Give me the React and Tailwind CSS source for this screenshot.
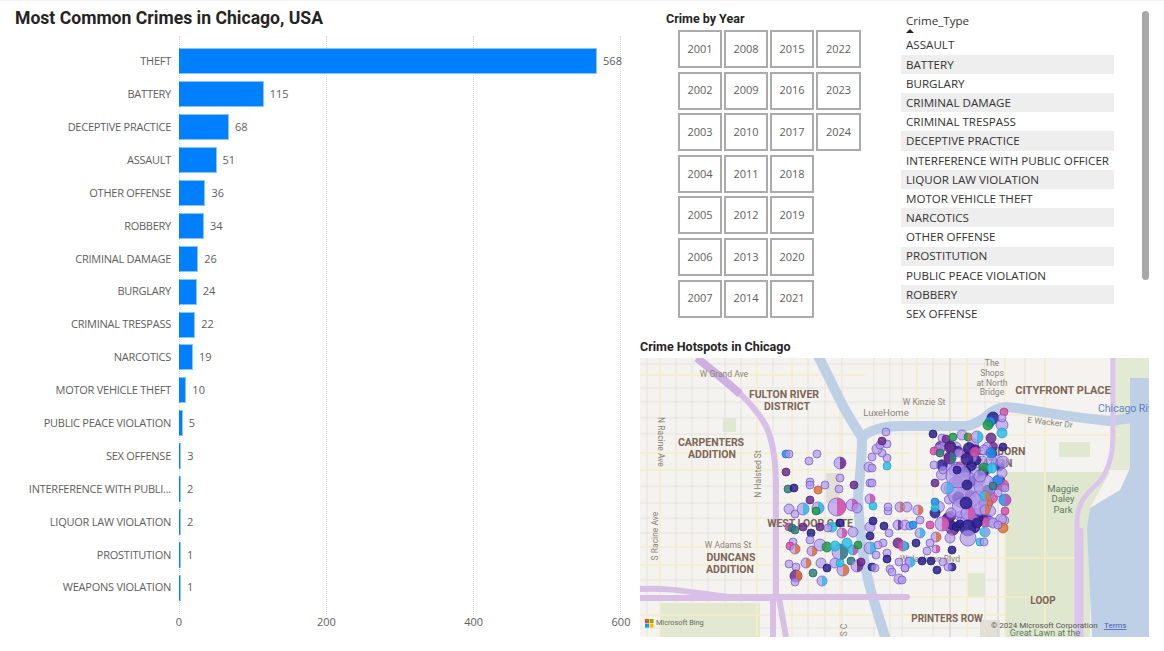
import React from 'react';

const crimes = [
  ['THEFT', 568], ['BATTERY', 115], ['DECEPTIVE PRACTICE', 68], ['ASSAULT', 51], ['OTHER OFFENSE', 36],
  ['ROBBERY', 34], ['CRIMINAL DAMAGE', 26], ['BURGLARY', 24], ['CRIMINAL TRESPASS', 22], ['NARCOTICS', 19],
  ['MOTOR VEHICLE THEFT', 10], ['PUBLIC PEACE VIOLATION', 5], ['SEX OFFENSE', 3],
  ['INTERFERENCE WITH PUBLI...', 2], ['LIQUOR LAW VIOLATION', 2], ['PROSTITUTION', 1], ['WEAPONS VIOLATION', 1],
];

const crimeTypes = [
  'ASSAULT', 'BATTERY', 'BURGLARY', 'CRIMINAL DAMAGE', 'CRIMINAL TRESPASS', 'DECEPTIVE PRACTICE',
  'INTERFERENCE WITH PUBLIC OFFICER', 'LIQUOR LAW VIOLATION', 'MOTOR VEHICLE THEFT', 'NARCOTICS',
  'OTHER OFFENSE', 'PROSTITUTION', 'PUBLIC PEACE VIOLATION', 'ROBBERY', 'SEX OFFENSE',
];

const years = Array.from({ length: 24 }, (_, i) => 2001 + i);
const axisTicks = [0, 200, 400, 600];
const PX_PER_UNIT = 0.736;

const colors = {
  l: ['#b09ae8', '#6f50d2'], n: ['#2a1f8f', '#1c1470'], p: ['#6b2d8f', '#4c1f70'], c: ['#2cc0e8', '#1f9ac4'],
  t: ['#2f7f7f', '#225f60'], k: ['#d94fa8', '#b0388a'], o: ['#e2703a', '#b8522a'], g: ['#1f9a4a', '#15793a'], b: ['#1e90ee', '#1a6fc0'],
};

// x, y, colour, radius, second slice colour
const bubbles = [
  [146,96,'b',4],[149,96,'l',4],[177,96,'l'],[169,103,'l'],[200,105,'l',6,'p'],[146,114,'p'],[148,131,'t'],[154,130,'n'],
  [170,124,'l'],[170,127,'l'],[178,132,'o'],[185,127,'l'],[200,120,'l'],[199,131,'l'],[214,127,'p'],[230,125,'l'],[232,125,'l'],
  [229,109,'l',5],[232,110,'l'],[247,108,'c'],[247,100,'l'],[232,99,'l'],[242,95,'l'],[237,91,'l',5],[240,87,'l'],[247,86,'l'],[242,83,'p'],[246,74,'l'],
  [170,142,'p'],[149,151,'l',5],[155,156,'l'],[163,151,'l',6,'c'],[178,150,'l',6,'c'],[176,153,'g',4],[197,149,'l',9,'k'],[212,147,'l',6,'k'],[217,150,'l',5],
  [230,141,'l',5,'k'],[233,148,'c'],[248,153,'l'],[248,149,'l'],[260,149,'l',5,'o'],[267,149,'l',5],
  [149,169,'k'],[152,170,'t'],[155,172,'t'],[163,169,'p'],[180,169,'p'],[171,175,'n'],[192,169,'c',5],[188,170,'l'],[200,165,'n'],[202,175,'l',5,'k'],[213,174,'l',5],
  [230,169,'l',5],[233,163,'n'],[244,168,'n'],[249,175,'l'],[230,178,'n'],[258,167,'l',5,'p'],[265,167,'l',5],[270,168,'l'],
  [153,184,'l'],[150,188,'k'],[155,191,'l',5,'o'],[172,193,'l',5,'o'],[170,182,'l'],[180,187,'l',6],[187,189,'g',5],[200,194,'l',8,'t'],[195,188,'c',5],[207,185,'c',5],
  [213,192,'c',5,'k'],[218,187,'g',4],[230,190,'l',6,'c'],[236,197,'l'],[243,185,'l'],[238,187,'l'],[258,185,'p',5],[265,188,'b',4],[247,195,'l'],[247,201,'n'],
  [149,206,'l'],[166,205,'l',5,'o'],[156,209,'l'],[156,218,'p',6,'o'],[155,224,'l'],[173,215,'t'],[182,223,'l',5,'c'],[181,205,'l',5],[187,210,'n'],[195,205,'l',5],
  [203,212,'l',6,'o'],[200,205,'c'],[211,203,'t'],[217,208,'l',6,'p'],[221,204,'p'],[232,209,'n'],[235,210,'l'],[250,211,'l'],[252,214,'l'],[259,221,'l',5],[259,204,'l'],[265,210,'l'],[269,203,'l'],
  [325,132,'l',18],[318,118,'l',12],[340,145,'l',12],[322,150,'l',10],[345,128,'l',11],[330,165,'l',10],
  [364,54,'k'],[353,60,'n',6],[350,64,'b',5],[348,67,'g',5],[362,67,'l',6],[362,75,'c',5],[362,60,'l',4],[293,76,'n'],[302,80,'l'],[306,81,'p'],[313,79,'g'],[322,77,'l',5],[328,79,'g',4,'o'],
  [337,79,'l',6,'c'],[351,80,'p',5],[363,89,'n'],[294,93,'k'],[300,95,'t'],[310,90,'p',5],[310,100,'p',6,'t'],[327,101,'n',6],[294,107,'l'],[317,112,'n'],[344,110,'g',5],[363,104,'l',6],[335,94,'k',5],
  [344,92,'l',5],[351,95,'b',5],[295,125,'p',4],[307,130,'l',6,'c'],[303,112,'l'],[327,127,'n',5],[340,118,'l',6],[352,110,'c',5],[358,122,'b',5],[362,115,'l',5],[353,128,'t'],[345,138,'c',5,'o'],
  [358,135,'l'],[365,130,'l'],[278,152,'l',5,'o'],[295,144,'b'],[295,155,'n',5],[295,150,'c',4],[311,155,'l',5],[328,155,'l',7,'k'],[326,145,'n',6],[345,152,'l',5,'o'],[350,145,'o',3],[365,153,'k'],
  [365,142,'b',6,'k'],[363,170,'o',5],[273,167,'b'],[280,162,'l'],[290,167,'k'],[302,166,'l',7,'k'],[320,166,'n',4],[328,170,'n',8],[337,165,'n',5],[345,174,'c',5,'l'],[353,165,'l',5],[358,167,'l'],
  [280,175,'l',5,'c'],[296,179,'l',5,'o'],[310,180,'l',5],[328,180,'l',8],[340,184,'c',4],[344,184,'l',4],[276,185,'n'],[263,188,'k',5,'c'],[290,185,'l'],[296,191,'l',4,'k'],[312,192,'n'],[287,193,'l'],
  [282,203,'n'],[291,203,'n',4],[303,204,'l'],[312,209,'n'],[308,209,'l'],[297,212,'n'],[270,204,'l',5,'c'],[265,210,'l'],[262,222,'l'],
];

// seeded so the dense downtown cluster is the same on every render
const mulberry = (seed) => () => {
  seed = (seed + 0x6d2b79f5) | 0;
  let t = Math.imul(seed ^ (seed >>> 15), 1 | seed);
  t = (t + Math.imul(t ^ (t >>> 7), 61 | t)) ^ t;
  return ((t ^ (t >>> 14)) >>> 0) / 4294967296;
};
const rand = mulberry(42);
const mix = ['l', 'l', 'l', 'l', 'l', 'l', 'l', 'n', 'p', 'l', 'n', 'l', 'k', 'p', 'n'];
const dense = Array.from({ length: 85 }, () => [
  298 + rand() * 66, 84 + rand() * 88, mix[Math.floor(rand() * mix.length)], 4 + rand() * 2,
]);

const minorV = [7, 36, 52, 68, 85, 101, 133, 168, 185, 202, 234, 250, 262, 293, 310, 345, 385];
const minorH = [6, 30, 44, 60, 76, 128, 145, 160, 175, 222, 270];

const Bubble = ({ b }) => {
  const [x, y, c, r = 4, slice] = b;
  const [fill, stroke] = colors[c];
  return (
    <g>
      <circle cx={x} cy={y} r={r} fill={fill} fillOpacity={c === 'l' ? 0.7 : 0.85} stroke={stroke} strokeOpacity="0.8" strokeWidth="0.9" />
      {slice && (
        <path d={`M${x} ${y - r}A${r} ${r} 0 0 1 ${x} ${y + r}Z`} fill={colors[slice][0]} fillOpacity="0.85" />
      )}
    </g>
  );
};

const MapLabel = ({ x, y, size = 8.5, bold, color = '#8a8478', rotate, anchor = 'middle', children }) => (
  <text
    x={x} y={y} fontSize={size} fontWeight={bold ? 700 : 400} fill={color} textAnchor={anchor} dominantBaseline="middle"
    transform={rotate ? `rotate(${rotate} ${x} ${y})` : undefined}
  >
    {children}
  </text>
);

const CrimeMap = () => (
  <svg viewBox="0 0 509 279" className="block w-[509px] h-[279px] [font-family:'Roboto',sans-serif]">
    <rect width="509" height="279" fill="#f5f3f0" />
    {/* parks */}
    <path d="M365 114H470L450 150V279H365Z" fill="#dfe8cf" />
    <path d="M470 0H509V112H470Z" fill="#e3ead3" />
    <path d="M20 245H120V279H20Z" fill="#e3e9cf" />
    <path d="M83 60H96V74H83Z M419 84H450V99H419Z M328 215H345V240H328Z" fill="#e0e8d0" />
    <path d="M186 115H200V145H186Z M340 262H360V279H340Z" fill="#e3dfd6" />
    {/* streets */}
    {minorV.map((x) => <path key={x} d={`M${x} 0V279`} stroke="#e5e2dd" strokeWidth="1" />)}
    {minorH.map((y) => <path key={y} d={`M0 ${y}H360`} stroke="#e5e2dd" strokeWidth="1" />)}
    <path d="M310 0V279 M358 80V279" stroke="#d8d6d3" strokeWidth="2" opacity="0.6" />
    <path d="M0 17H225 M0 95H270 M0 112H290 M0 189H300 M0 207H260 M260 200H440 M0 257H365 M0 239H403 M290 77H480 M350 57H470 M350 106H365" stroke="#f6edc9" strokeWidth="1.6" fill="none" />
    <path d="M20 0V279 M117 0V279 M152 0V279 M200 30V279 M277 0V140 M327 0V279 M365 0V279 M405 0V279" stroke="#f6edc9" strokeWidth="1.6" fill="none" />
    {/* water */}
    <g fill="none" stroke="#bdd0e5" strokeWidth="10">
      <path d="M178 -2C190 20 200 45 210 60C214 68 218 72 222 80" />
      <path d="M222 80C228 72 245 68 260 68H327C345 65 350 49 367 49C385 50 410 57 470 63L492 60" />
      <path d="M222 80C222 110 218 130 218 140C220 180 225 215 233 240L246 282" />
    </g>
    <path d="M490 20H509V279H452L447 170L450 150L480 132L490 110Z" fill="#bdd0e5" />
    {/* expressways */}
    <path d="M57 0C85 22 112 42 126 68C134 85 136 105 136 130V240M133 240V279M139 240L146 279" stroke="#d8bfe6" strokeWidth="6" fill="none" />
    <path d="M0 231C30 229 60 236 90 239H267M0 240H140" stroke="#d8bfe6" strokeWidth="6" strokeLinecap="round" fill="none" />
    <path d="M57 0C70 11 85 22 100 36" stroke="#cdb0e0" strokeWidth="8" fill="none" />
    <path d="M473 0V77C473 95 470 110 460 123C445 137 437 145 437 165V279M441 279V170" stroke="#dcc5ec" strokeWidth="5" fill="none" />
    {/* labels */}
    <MapLabel x={84} y={17}>W Grand Ave</MapLabel>
    <MapLabel x={144} y={37} size={10.5} bold color="#7d6555">FULTON RIVER</MapLabel>
    <MapLabel x={147} y={49} size={10.5} bold color="#7d6555">DISTRICT</MapLabel>
    <MapLabel x={246} y={55} size={9.5}>LuxeHome</MapLabel>
    <MapLabel x={71} y={85} size={10.5} bold color="#7d6555">CARPENTERS</MapLabel>
    <MapLabel x={72} y={97} size={10.5} bold color="#7d6555">ADDITION</MapLabel>
    <MapLabel x={20} y={84} rotate={90}>N Racine Ave</MapLabel>
    <MapLabel x={119} y={116} rotate={-90}>N Halsted St</MapLabel>
    <MapLabel x={284} y={45}>W Kinzie St</MapLabel>
    <MapLabel x={352} y={6}>The</MapLabel>
    <MapLabel x={352} y={16}>Shops</MapLabel>
    <MapLabel x={352} y={26}>at North</MapLabel>
    <MapLabel x={352} y={35}>Bridge</MapLabel>
    <MapLabel x={423} y={33} size={11} bold color="#7d6555">CITYFRONT PLACE</MapLabel>
    <MapLabel x={458} y={51} size={10.5} color="#5b7fc7" anchor="start">Chicago River</MapLabel>
    <MapLabel x={410} y={65} rotate={7}>E Wacker Dr</MapLabel>
    <MapLabel x={358} y={94} size={10.5} bold color="#7d6555">DEARBORN</MapLabel>
    <MapLabel x={351} y={106} size={10.5} bold color="#7d6555">STATION</MapLabel>
    <MapLabel x={423} y={131} size={9.5} color="#5c7a60">Maggie</MapLabel>
    <MapLabel x={423} y={141} size={9.5} color="#5c7a60">Daley</MapLabel>
    <MapLabel x={423} y={152} size={9.5} color="#5c7a60">Park</MapLabel>
    <MapLabel x={88} y={188}>W Adams St</MapLabel>
    <MapLabel x={91} y={200} size={10.5} bold color="#7d6555">DUNCANS</MapLabel>
    <MapLabel x={90} y={212} size={10.5} bold color="#7d6555">ADDITION</MapLabel>
    <MapLabel x={16} y={178} rotate={-90}>S Racine Ave</MapLabel>
    <MapLabel x={170} y={166} size={10.5} bold color="#7d6555">WEST LOOP GATE</MapLabel>
    <MapLabel x={290} y={202}>W Jackson Blvd</MapLabel>
    <MapLabel x={403} y={243} size={10} bold color="#7d6555">LOOP</MapLabel>
    <MapLabel x={307} y={261} size={10} bold color="#7d6555">PRINTERS ROW</MapLabel>
    <MapLabel x={405} y={276} size={9} color="#5c7a60">Great Lawn at the</MapLabel>
    <MapLabel x={205} y={272} rotate={-90}>S C</MapLabel>
    {/* points */}
    {dense.map((b, i) => <Bubble key={`d${i}`} b={b} />)}
    {bubbles.map((b, i) => <Bubble key={i} b={b} />)}
    {/* attribution */}
    <g>
      <rect x="5" y="261" width="4" height="4" fill="#f25022" />
      <rect x="9.6" y="261" width="4" height="4" fill="#7fba00" />
      <rect x="5" y="265.6" width="4" height="4" fill="#00a4ef" />
      <rect x="9.6" y="265.6" width="4" height="4" fill="#ffb900" />
      <text x="16" y="265.5" fontSize="7.3" fill="#666" dominantBaseline="middle">Microsoft Bing</text>
    </g>
    <text x="351" y="268" fontSize="8" fill="#555" dominantBaseline="middle">© 2024 Microsoft Corporation</text>
    <text x="464" y="268" fontSize="8" fill="#4a5fb5" textDecoration="underline" dominantBaseline="middle">Terms</text>
  </svg>
);

const CrimeChart = () => (
  <div className="relative mt-[1px]">
    {/* gridlines sit over the plot area */}
    <div className="absolute left-[179px] top-[-9px] h-[578px] w-[442px] flex justify-between">
      {axisTicks.map((t) => <div key={t} className="w-0 border-l border-dotted border-[#d6d6d6]" />)}
    </div>
    <div className="relative">
      {crimes.map(([name, value]) => (
        <div key={name} className="flex items-center h-[32.9px] text-[11px] text-[#605e5c]">
          <div className="w-[171px] text-right whitespace-nowrap tracking-[-0.25px]">{name}</div>
          <div
            className="ml-2 h-[26px] min-w-[1px] bg-[#0080ff] border border-[#0080ff] border-r-[#8cc4ff] border-t-[#8cc4ff] border-b-[#8cc4ff]"
            style={{ width: value * PX_PER_UNIT }}
          />
          <div className="ml-[6px] text-[11px]">{value}</div>
        </div>
      ))}
    </div>
    <div className="relative h-[20px] mt-[10px] ml-[179px] w-[442px] flex justify-between text-[11px] text-[#605e5c]">
      {axisTicks.map((t) => <span key={t} className="w-0 flex justify-center">{t}</span>)}
    </div>
  </div>
);

const YearSlicer = () => (
  <div className="w-[261px] pl-[26px]">
    <div className="h-[29px] pt-[10px] text-[12.5px] leading-[16px] font-bold text-[#252423] [font-family:'Roboto',sans-serif]">Crime by Year</div>
    <div className="ml-[12px] grid grid-flow-col grid-rows-7 grid-cols-[44px_44px_44px_45px] gap-x-[2px] gap-y-[3.6px]">
      {years.map((y) => (
        <div key={y} className="h-[38px] flex items-center justify-center border-2 border-[#ababab] text-[11px] text-[#605e5c]">{y}</div>
      ))}
    </div>
  </div>
);

const TypeList = () => (
  <div className="w-[213px] pt-[11px]">
    <div className="relative h-[23.5px] pl-[5px] text-[11.6px] leading-[18px] text-[#333]">
      Crime_Type
      <svg viewBox="0 0 8 4" className="absolute left-[5px] top-[17px] w-[8px] h-[4px]"><path d="M0 4L4 0L8 4Z" fill="#252423" /></svg>
    </div>
    {crimeTypes.map((t, i) => (
      <div key={t} className={`h-[19.2px] pl-[5px] flex items-center whitespace-nowrap text-[11.6px] text-[#333] ${i % 2 ? 'bg-[#eeeeee]' : 'bg-white'}`}>{t}</div>
    ))}
  </div>
);

export default function App() {
  return (
    <div className="w-[1164px] h-[651px] bg-white flex overflow-hidden border-t border-[#f3f3f3] [font-family:'Open_Sans',sans-serif]">
      <div className="w-[640px] shrink-0">
        <h1 className="pl-[15px] pt-[6px] h-[43px] text-[17.6px] leading-[22px] font-bold text-[#252423] [font-family:'Roboto',sans-serif]">
          Most Common Crimes in Chicago, USA
        </h1>
        <CrimeChart />
      </div>
      <div className="relative flex-1">
        <div className="flex h-[337px]">
          <YearSlicer />
          <TypeList />
        </div>
        {/* scrollbar of the list */}
        <div className="absolute left-[502px] top-[10px] w-[7px] h-[269px] rounded bg-[#a8a8a8]" />
        <div className="h-[20px] text-[12.5px] leading-[17px] font-bold text-[#252423] [font-family:'Roboto',sans-serif]">Crime Hotspots in Chicago</div>
        <CrimeMap />
      </div>
    </div>
  );
}
